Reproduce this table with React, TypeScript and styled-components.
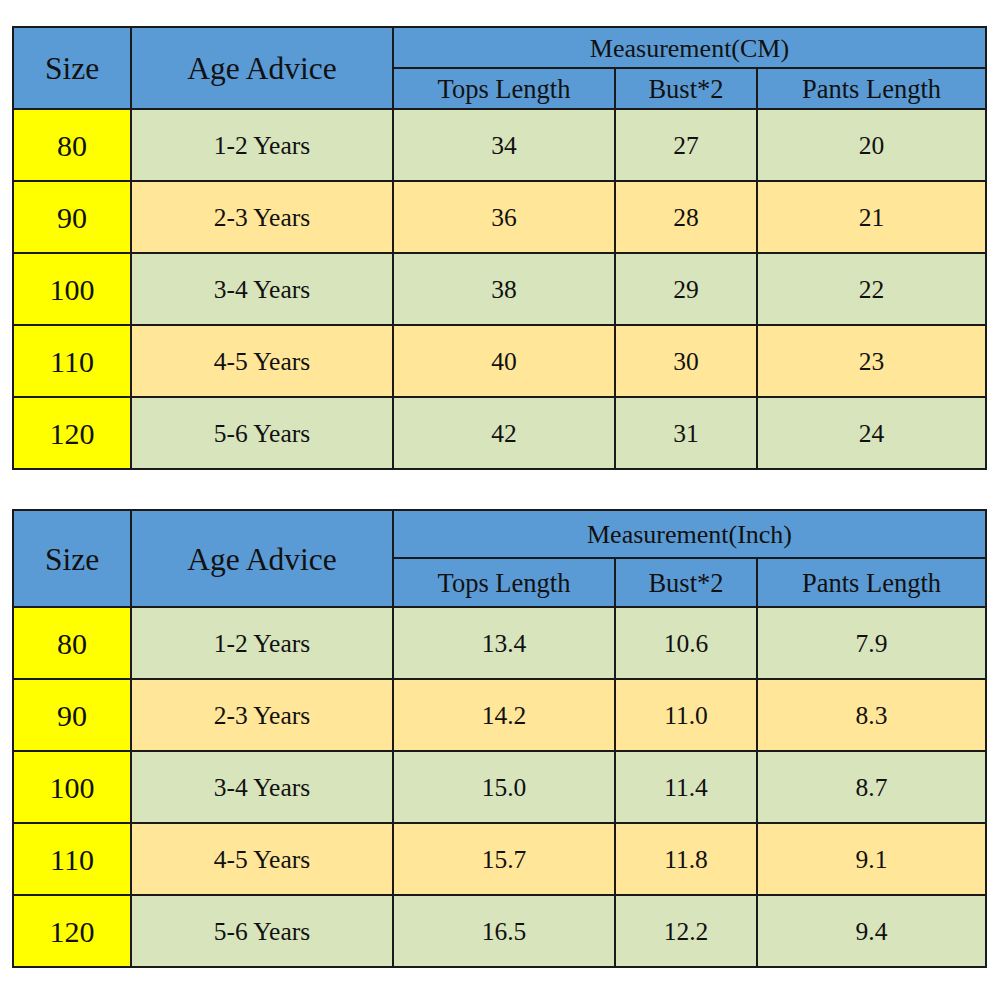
import React from "react";
import styled, { createGlobalStyle } from "styled-components";

const Global = createGlobalStyle`
  html, body { margin: 0; padding: 0; background: #ffffff; }
  body { font-family: "Liberation Serif", "Times New Roman", serif; color: #111; }
`;

const Page = styled.div`
  display: flex;
  flex-direction: column;
  gap: 39px;
  padding: 26px 0 0 12px;
  width: 973px;
`;

const Chart = styled.table`
  border-collapse: collapse;
  width: 973px;
  table-layout: fixed;
  border: 2px solid #1a1a1a;
`;

const HeadRow = styled.tr<{ $h: number }>`
  height: ${(p) => p.$h}px;
`;

const BodyRow = styled.tr`
  height: 72px;
`;

const HeadCell = styled.th<{ $size: number }>`
  background: #5b9bd5;
  border: 2px solid #1a1a1a;
  font-weight: normal;
  font-size: ${(p) => p.$size}px;
  text-align: center;
  vertical-align: middle;
  padding: 2px 0 0 0;
  color: #111;
`;

const SizeCell = styled.td`
  background: #ffff00;
  border: 2px solid #1a1a1a;
  font-size: 30px;
  text-align: center;
  vertical-align: middle;
  padding: 2px 0 0 0;
`;

const Cell = styled.td<{ $tone: "green" | "orange" }>`
  background: ${(p) => (p.$tone === "green" ? "#d8e4bc" : "#ffe699")};
  border: 2px solid #1a1a1a;
  font-size: 25.5px;
  text-align: center;
  vertical-align: middle;
  padding: 2px 0 0 0;
`;

type Row = [string, string, string, string, string];

const cmRows: Row[] = [
  ["80", "1-2 Years", "34", "27", "20"],
  ["90", "2-3 Years", "36", "28", "21"],
  ["100", "3-4 Years", "38", "29", "22"],
  ["110", "4-5 Years", "40", "30", "23"],
  ["120", "5-6 Years", "42", "31", "24"],
];

const inchRows: Row[] = [
  ["80", "1-2 Years", "13.4", "10.6", "7.9"],
  ["90", "2-3 Years", "14.2", "11.0", "8.3"],
  ["100", "3-4 Years", "15.0", "11.4", "8.7"],
  ["110", "4-5 Years", "15.7", "11.8", "9.1"],
  ["120", "5-6 Years", "16.5", "12.2", "9.4"],
];

function SizeTable({ unit, rows, h1, h2 }: { unit: string; rows: Row[]; h1: number; h2: number }) {
  return (
    <Chart>
      <colgroup>
        <col style={{ width: 118 }} />
        <col style={{ width: 262 }} />
        <col style={{ width: 222 }} />
        <col style={{ width: 142 }} />
        <col style={{ width: 229 }} />
      </colgroup>
      <thead>
        <HeadRow $h={h1}>
          <HeadCell $size={31.5} rowSpan={2}>Size</HeadCell>
          <HeadCell $size={31.5} rowSpan={2}>Age Advice</HeadCell>
          <HeadCell $size={26} colSpan={3}>{`Measurement(${unit})`}</HeadCell>
        </HeadRow>
        <HeadRow $h={h2}>
          <HeadCell $size={26.5}>Tops Length</HeadCell>
          <HeadCell $size={26.5}>Bust*2</HeadCell>
          <HeadCell $size={26.5}>Pants Length</HeadCell>
        </HeadRow>
      </thead>
      <tbody>
        {rows.map((r, i) => {
          const tone = i % 2 === 0 ? "green" : "orange";
          return (
            <BodyRow key={r[0]}>
              <SizeCell>{r[0]}</SizeCell>
              <Cell $tone={tone}>{r[1]}</Cell>
              <Cell $tone={tone}>{r[2]}</Cell>
              <Cell $tone={tone}>{r[3]}</Cell>
              <Cell $tone={tone}>{r[4]}</Cell>
            </BodyRow>
          );
        })}
      </tbody>
    </Chart>
  );
}

export default function App() {
  return (
    <>
      <Global />
      <Page>
        <SizeTable unit="CM" rows={cmRows} h1={41} h2={41} />
        <SizeTable unit="Inch" rows={inchRows} h1={48} h2={49} />
      </Page>
    </>
  );
}
